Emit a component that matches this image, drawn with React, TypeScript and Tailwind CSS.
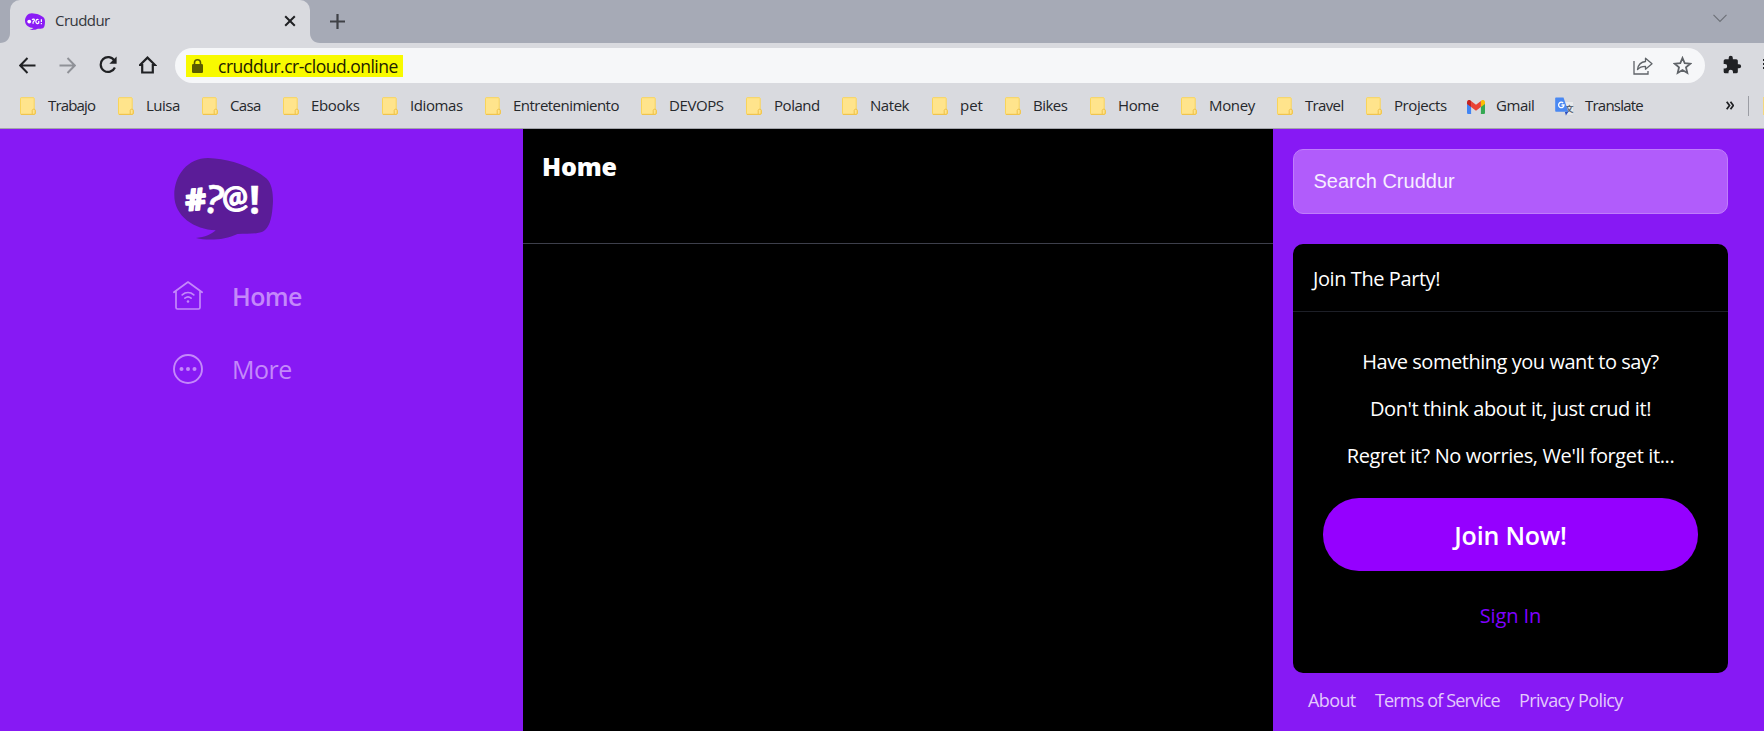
import { clsx } from "clsx";

type Bookmark = { label: string; slot: string; tracking: string; icon?: "gmail" | "translate" };

const bookmarks: Bookmark[] = [
  { label: "Trabajo", slot: "w-[98px]", tracking: "tracking-[-0.85px]" },
  { label: "Luisa", slot: "w-[84px]", tracking: "tracking-[-0.5px]" },
  { label: "Casa", slot: "w-[81px]", tracking: "tracking-[-0.65px]" },
  { label: "Ebooks", slot: "w-[99px]", tracking: "tracking-[-0.35px]" },
  { label: "Idiomas", slot: "w-[103px]", tracking: "tracking-[-0.4px]" },
  { label: "Entretenimiento", slot: "w-[156px]", tracking: "tracking-[-0.53px]" },
  { label: "DEVOPS", slot: "w-[105px]", tracking: "tracking-[-0.4px]" },
  { label: "Poland", slot: "w-[96px]", tracking: "tracking-[-0.45px]" },
  { label: "Natek", slot: "w-[90px]", tracking: "tracking-[-0.45px]" },
  { label: "pet", slot: "w-[73px]", tracking: "tracking-[0px]" },
  { label: "Bikes", slot: "w-[85px]", tracking: "tracking-[-0.5px]" },
  { label: "Home", slot: "w-[91px]", tracking: "tracking-[-0.4px]" },
  { label: "Money", slot: "w-[96px]", tracking: "tracking-[-0.35px]" },
  { label: "Travel", slot: "w-[89px]", tracking: "tracking-[-0.65px]" },
  { label: "Projects", slot: "w-[101px]", tracking: "tracking-[-0.42px]" },
  { label: "Gmail", slot: "w-[88px]", tracking: "tracking-[-0.45px]", icon: "gmail" },
  { label: "Translate", slot: "w-[171px]", tracking: "tracking-[-0.78px]", icon: "translate" },
];

function FolderIcon() {
  return (
    <svg className="h-[18px] w-[16px] shrink-0" viewBox="0 0 16 18">
      <path d="M1.2.7h12.3c.4 0 .7.3.7.7v10.8c1 .3 1.2.8 1.2 1.5v2.6c0 .7-.4 1.2-1.1 1.2H1.2c-.4 0-.7-.3-.7-.7V1.4c0-.4.3-.7.7-.7Z" fill="#ffe48c" stroke="#f9d45a" />
      <path d="M1 17.3h13.2M12.2 17v-3.6c0-1.6 3-1.6 3 0v2.8c0 .7-.4 1.1-1 1.1" fill="none" stroke="#eec04a" />
    </svg>
  );
}

function GmailIcon() {
  return (
    <svg className="mt-px h-[14px] w-[18px] shrink-0" viewBox="0 0 18 14">
      <path d="M0 3v9.7C0 13.4.6 14 1.3 14h2.8V5Z" fill="#4285f4" />
      <path d="M18 3v9.7c0 .7-.6 1.3-1.3 1.3h-2.8V5Z" fill="#34a853" />
      <path d="M13.9 1.1V7L18 4V2.2C18 .3 15.9-.7 14.4.4Z" fill="#fbbc04" />
      <path d="M4.1 7V1.1L9 4.8l4.9-3.7V7L9 10.7Z" fill="#ea4335" />
      <path d="M0 2.2V4l4.1 3V1.1L3.6.4C2.100-.7 0 .3 0 2.2Z" fill="#c5221f" />
    </svg>
  );
}

function TranslateIcon() {
  return (
    <svg className="h-[19px] w-[19px] shrink-0" viewBox="0 0 19 19">
      <path d="M6 4.500h11.500c.6 0 1 .4 1 1v11.500c0 .6-.4 1-1 1H10Z" fill="#e8e9eb" stroke="#cfd1d6" strokeWidth=".5" />
      <text x="14.300" y="14.500" fontSize="8.500" fontWeight="700" textAnchor="middle" fill="#5d6672" fontFamily="Noto Sans CJK SC, sans-serif">文</text>
      <path d="m9.800 14.800 3.600 0-2.500 3.600Z" fill="#2f4fc0" />
      <path d="M1.200.5h7.300l4.900 14.300H1.200c-.6 0-1-.4-1-1V1.500c0-.6.400-1 1-1Z" fill="#4a88f2" />
      <path d="M8.200 6A2.700 2.700 0 1 0 9 8H6.500" fill="none" stroke="#fff" strokeWidth="1.300" />
    </svg>
  );
}

function CruddurMark() {
  return (
    <svg className="h-[95px] w-[110px]" viewBox="0 0 110 95">
      <path
        d="M6.300 45C6.300 25 20 8 40 8c23 .5 47 10.500 58.500 20.500C105.500 35 105.400 50 104.600 57c-.9 12-3.600 21.500-9.600 24.500-7 3-16 2-25.500 2.400C57 90 40 90.800 28 88c8.500-.7 16.500-4.200 19.700-7.700C26.500 79.300 6.300 66.700 6.300 45Z"
        fill="#5b1c98"
      />
      <g fill="#fff" stroke="#fff" textAnchor="middle" strokeLinejoin="round">
        <text x="27.500" y="60" fontSize="30" fontWeight="700" strokeWidth="1.600" fontFamily="Open Sans, sans-serif" textLength="21" lengthAdjust="spacingAndGlyphs" transform="rotate(-5 28 50)">#</text>
        <text x="46.500" y="63.500" fontSize="39" fontWeight="600" strokeWidth=".5" fontFamily="Open Sans, sans-serif" transform="rotate(13 47 50)">?</text>
        <text x="67.500" y="58" fontSize="31" fontWeight="700" strokeWidth="1" fontFamily="Lato, sans-serif" transform="rotate(-12 67 50)">@</text>
        <text x="86.500" y="63.800" fontSize="39" fontWeight="700" strokeWidth=".3" fontFamily="Open Sans, sans-serif">!</text>
      </g>
    </svg>
  );
}

function TabStrip() {
  return (
    <div className="flex h-[43px] bg-[#a6aab6]">
      <svg className="h-[43px] w-[10px] shrink-0" viewBox="0 0 10 43">
        <path d="M0 43c6 0 10-4 10-10v10Z" fill="#d9dadf" />
      </svg>
      <div className="flex w-[300px] items-center rounded-t-[10px] bg-[#d9dadf] pr-[14px] pl-[15px]">
        <svg className="h-[17px] w-[20px]" viewBox="6 7 99 83" preserveAspectRatio="none">
          <path d="M6 45C6 25 20 8 40 8c23 .5 47 10.500 58.500 20.500C105.500 35 105.400 50 104.600 57c-.9 12-3.600 21.500-9.600 24.500-7 3-16 2-25.500 2.400C57 90 40 90.800 28 88c8.500-.7 16.500-4.200 19.700-7.700C26.500 79.300 6 66.700 6 45Z" fill="#8a1cf5" />
          <circle cx="27" cy="49" r="9.500" fill="#fff" />
          <path d="M41 40c5-6 14-3 11 4l-6 8v7M73 40c-9-5-15 4-13 12 2 8 10 8 14 4V46M87 37v14M87 56v6" fill="none" stroke="#fff" strokeWidth="6" />
        </svg>
        <span className="-mt-[2px] ml-[10px] text-[15px] tracking-[-0.55px] text-[#34363b]">Cruddur</span>
        <svg className="-mt-px ml-auto h-[12px] w-[12px]" viewBox="0 0 12 12">
          <path d="m1.200 1.200 9.600 9.600m0-9.600-9.600 9.600" stroke="#202124" strokeWidth="2" />
        </svg>
      </div>
      <svg className="h-[43px] w-[10px] shrink-0" viewBox="0 0 10 43">
        <path d="M10 43C4 43 0 39 0 33v10Z" fill="#d9dadf" />
      </svg>
      <svg className="mt-[14px] ml-[10px] h-[15px] w-[15px]" viewBox="0 0 15 15">
        <path d="M7.500 0v15M0 7.500h15" stroke="#3f4146" strokeWidth="2.200" />
      </svg>
      <svg className="mt-[14px] mr-[37px] ml-auto h-[9px] w-[14px]" viewBox="0 0 14 9">
        <path d="m.5.800 6.500 6.700L13.500.8" fill="none" stroke="#6d7078" strokeWidth="1.100" />
      </svg>
    </div>
  );
}

function Toolbar() {
  return (
    <div className="flex h-[45px] items-center bg-[#d9dadf]">
      <svg className="-mt-px ml-[19px] h-[17px] w-[17px]" viewBox="0 0 17 17">
        <path d="M16.500 8.500H1.500M8.500 1 1.200 8.500 8.500 16" fill="none" stroke="#202124" strokeWidth="2" />
      </svg>
      <svg className="-mt-px ml-[23px] h-[17px] w-[17px]" viewBox="0 0 17 17">
        <path d="M.500 8.500h15M8.500 1l7.300 7.500L8.500 16" fill="none" stroke="#8f9197" strokeWidth="1.900" />
      </svg>
      <svg className="-mt-px ml-[23px] h-[18px] w-[18px]" viewBox="0 0 18 18">
        <path d="M15.400 4.600A7.400 7.400 0 1 0 15.900 11.500" fill="none" stroke="#202124" strokeWidth="2.200" />
        <path d="M17.600.6v7.200h-7.200Z" fill="#202124" />
      </svg>
      <svg className="-mt-px ml-[22px] h-[18px] w-[18px]" viewBox="0 0 18 18">
        <path d="M1 9 8.500 1.600 16 9h-2.200v7.500H3.200V9Z" fill="none" stroke="#202124" strokeWidth="2.200" />
      </svg>
      <div className="ml-[18px] flex h-[35px] w-[1530px] shrink-0 items-center rounded-full bg-[#f6f7f9] pl-[11px]">
        <div className="mt-px flex h-[22px] w-[217px] items-center bg-[#f8fa00] pl-[6px]">
          <svg className="h-[14px] w-[11px]" viewBox="0 0 11 14">
            <path d="M2.500 6V3.800a3 3 0 0 1 6 0V6" fill="none" stroke="#5b5c00" strokeWidth="1.600" />
            <rect y="5" width="11" height="9" rx="1.200" fill="#5b5c00" />
          </svg>
          <span className="ml-[15px] text-[17.5px] leading-[22px] tracking-[-0.5px] whitespace-nowrap text-[#1e2000]">cruddur.cr-cloud.online</span>
        </div>
        <svg className="ml-auto h-[18px] w-[20px]" viewBox="0 0 20 18">
          <path d="M1 4v13h14v-3" fill="none" stroke="#5f6368" strokeWidth="1.300" />
          <path d="M12.500 1.200 19 6.800l-6.500 5.400V9.300c-3.500 0-6 .8-8 3.200.6-4.300 3.600-7.600 8-8Z" fill="none" stroke="#5f6368" strokeWidth="1.300" strokeLinejoin="round" />
        </svg>
        <svg className="mr-[13px] ml-[20px] h-[19px] w-[19px]" viewBox="0 0 19 19">
          <path d="m9.500 2 2.200 5.200 5.600.5-4.300 3.700 1.300 5.500-4.800-2.900-4.800 2.900L6 11.400 1.700 7.700l5.600-.5Z" fill="none" stroke="#5f6368" strokeWidth="1.800" />
        </svg>
      </div>
      <svg className="-mt-px ml-[17px] h-[20px] w-[20px] shrink-0" viewBox="0 0 24 24">
        <path d="M20.500 11H19V7a2 2 0 0 0-2-2h-4V3.500a2.500 2.500 0 0 0-5 0V5H4a2 2 0 0 0-2 2v3.800h1.500a2.700 2.700 0 0 1 0 5.400H2V20a2 2 0 0 0 2 2h3.800v-1.500a2.700 2.700 0 0 1 5.400 0V22H17a2 2 0 0 0 2-2v-4h1.500a2.500 2.500 0 0 0 0-5Z" fill="#202124" />
      </svg>
      <div className="-mt-[3px] ml-[21px] flex w-px shrink-0 flex-col gap-[2px]">
        <i className="h-[2px] bg-[#202124]" />
        <i className="h-[2px] bg-[#202124]" />
        <i className="h-[2px] bg-[#202124]" />
      </div>
    </div>
  );
}

function BookmarkBar() {
  return (
    <div className="flex h-[41px] items-start overflow-hidden border-b border-[#a3a5ab] bg-[#d9dadf] pt-[8px] pl-[20px]">
      {bookmarks.map((b) => (
        <div key={b.label} className={clsx("flex h-[20px] shrink-0 items-center", b.slot)}>
          {b.icon === "gmail" ? <GmailIcon /> : b.icon === "translate" ? <TranslateIcon /> : <FolderIcon />}
          <span className={clsx("-mt-[2px] text-[15px] leading-[20px] whitespace-nowrap text-[#26282c]", b.tracking, b.icon ? "ml-[11px]" : "ml-[12px]")}>{b.label}</span>
        </div>
      ))}
      <svg className="mt-[5px] h-[9px] w-[8px] shrink-0" viewBox="0 0 8 9">
        <path d="m.700.800 2.800 3.700L.7 8.200M4.500.8l2.800 3.700-2.800 3.700" fill="none" stroke="#202124" strokeWidth="1.800" />
      </svg>
      <div className="ml-[14px] h-[20px] w-px shrink-0 bg-[#9b9da4]" />
      <div className="mt-px ml-[14px] h-[18px] w-[2px] shrink-0 bg-[#f4d77c]" />
    </div>
  );
}

function Sidebar() {
  return (
    <nav className="flex w-[523px] shrink-0 flex-col bg-[#8719f4] pt-[21px] pl-[168px] text-[25px] leading-[34px] text-[#c488fa]">
      <CruddurMark />
      <a className="mt-[33px] flex h-[36px] items-center pl-[5px]">
        <svg className="h-[32px] w-[30px]" viewBox="0 0 30 32" fill="none" stroke="currentColor" strokeWidth="1.700" strokeLinecap="round" strokeLinejoin="round">
          <path d="M.9 12.300 15 2l14.100 10.300M3 11v16.500c0 1 .6 1.500 1.500 1.500h21c1 0 1.500-.6 1.500-1.500V11" />
          <path d="M9.200 14.900c3.500-3 8.100-3 11.600 0M11.900 18.100c1.900-1.600 4.300-1.600 6.200 0" />
          <circle cx="15" cy="21.500" r="1.300" fill="currentColor" stroke="none" />
        </svg>
        <span className="ml-[29px] font-semibold tracking-[-0.6px]">Home</span>
      </a>
      <a className="mt-[37px] flex h-[36px] items-center pl-[5px]">
        <svg className="h-[30px] w-[30px]" viewBox="0 0 30 30">
          <circle cx="15" cy="15" r="14" fill="none" stroke="currentColor" strokeWidth="1.900" />
          <g fill="currentColor">
            <circle cx="8.500" cy="15" r="2" />
            <circle cx="15" cy="15" r="2" />
            <circle cx="21.500" cy="15" r="2" />
          </g>
        </svg>
        <span className="ml-[29px] tracking-[-0.5px]">More</span>
      </a>
    </nav>
  );
}

function JoinPanel() {
  return (
    <section className="mt-[30px] h-[429px] rounded-[10px] bg-black text-center text-[20px] text-white">
      <h2 className="h-[68px] border-b border-[#1d1f27] pl-[20px] text-left leading-[69px] tracking-[-0.42px]">Join The Party!</h2>
      <div className="flex flex-col px-[30px] pt-[35px]">
        <p className="leading-[30px] tracking-[-0.46px]">Have something you want to say?</p>
        <p className="mt-[17px] leading-[30px] tracking-[-0.38px]">Don't think about it, just crud it!</p>
        <p className="mt-[17px] leading-[30px] tracking-[-0.38px]">Regret it? No worries, We'll forget it...</p>
        <button className="mt-[27px] h-[73px] rounded-[36px] bg-[#9500ff] pt-[2px] text-[25px] font-semibold tracking-[-0.2px]">Join Now!</button>
        <a className="mt-[30px] leading-[30px] tracking-[-0.1px] text-[#7f00ff]">Sign In</a>
      </div>
    </section>
  );
}

export default function App() {
  return (
    <div className="flex h-[731px] w-[1764px] flex-col overflow-hidden bg-black font-['Open_Sans','Noto_Sans',sans-serif]">
      <TabStrip />
      <Toolbar />
      <BookmarkBar />
      <div className="flex flex-1">
        <Sidebar />
        <main className="w-[750px] shrink-0 bg-black">
          <header className="h-[115px] border-b border-[#3d3f4b] pt-[20px] pl-[19px]">
            <h1 className="text-[25px] leading-[34px] font-extrabold tracking-[-0.2px] text-white">Home</h1>
          </header>
        </main>
        <aside className="flex-1 bg-[#8719f4] pt-[20px] pr-[36px] pl-[20px]">
          <input
            placeholder="Search Cruddur"
            className="block h-[65px] w-full rounded-[10px] border border-[#c07dfb] bg-[#b15cfb] px-[19.5px] font-['Liberation_Sans',sans-serif] text-[20px] text-white placeholder:text-[#f7eeff] placeholder:opacity-100"
          />
          <JoinPanel />
          <footer className="mt-[14px] flex pl-[15px] text-[18px] leading-[27px] whitespace-nowrap text-[#e3c9fc]">
            <a className="w-[67px] tracking-[-0.6px]">About</a>
            <a className="w-[144px] tracking-[-0.85px]">Terms of Service</a>
            <a className="tracking-[-0.62px]">Privacy Policy</a>
          </footer>
        </aside>
      </div>
    </div>
  );
}
